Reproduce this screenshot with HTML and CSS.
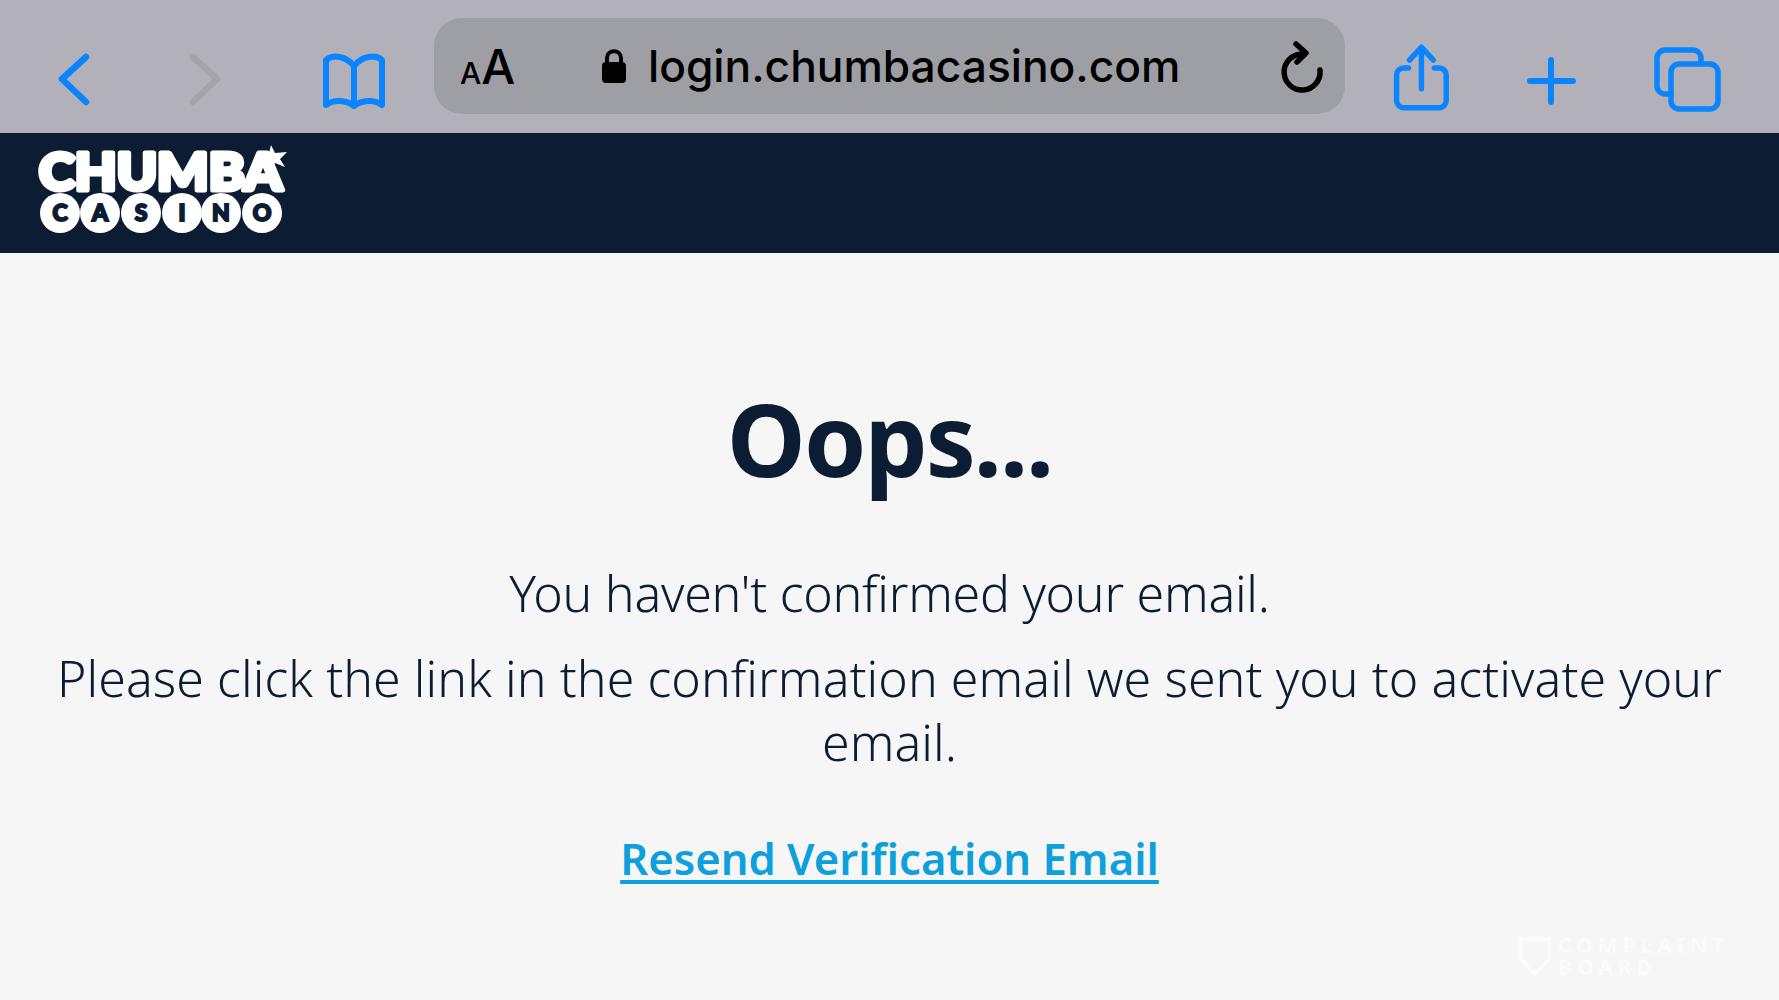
FILE: index.html
```html
<!DOCTYPE html>
<html lang="en">
<head>
<meta charset="utf-8">
<title>Chumba Casino</title>
<link rel="stylesheet" href="styles.css">
</head>
<body>
<div class="toolbar">
  <svg class="slot slot-back" viewBox="0 0 130 133"><path class="ic blue" d="M86 57 62 79 86 102"/></svg>
  <svg class="slot slot-fwd" viewBox="130 0 120 133"><path class="ic grey" d="M193 57 217 79 193 102"/></svg>
  <svg class="slot slot-book" viewBox="250 0 184 133"><path class="ic blue book" d="M354 66C346 56 333 54 326 60V105C334 99 346 100 354 106C362 100 374 99 382 105V60C375 54 362 56 354 66ZM354 66V106"/></svg>
  <div class="urlbar">
    <div class="aa"><span class="aa-s">A</span><span class="aa-l">A</span></div>
    <svg class="lock" viewBox="0 0 26 36"><path class="lock-bow" d="M6 16V10C6 1 20 1 20 10V16"/><rect class="lock-body" x="1" y="14" width="24" height="21" rx="4"/></svg>
    <span class="url">login.chumbacasino.com</span>
    <svg class="reload" viewBox="0 0 44 52"><path class="ic dark wide" d="M40 28A18 18 0 1 1 22 12M16 2 26 11 17 20"/></svg>
  </div>
  <svg class="slot slot-share" viewBox="1344 0 132 133"><path class="ic blue thin" d="M1408 68H1403A7 7 0 0 0 1396 75V101A7 7 0 0 0 1403 108H1439A7 7 0 0 0 1446 101V75A7 7 0 0 0 1439 68H1434M1421 89V48M1409 60 1421 47 1433 60"/></svg>
  <svg class="slot slot-plus" viewBox="1476 0 130 133"><path class="ic blue plus" d="M1551 60V102M1530 81H1573"/></svg>
  <svg class="slot slot-tabs" viewBox="1606 0 173 133"><path class="ic blue thin" d="M1671 94H1665A8 8 0 0 1 1657 86V58A8 8 0 0 1 1665 50H1693A8 8 0 0 1 1701 58V64"/><rect class="ic blue thin" x="1671" y="64" width="47" height="45" rx="8"/></svg>
</div>
<header class="site-head">
  <svg class="logo" viewBox="0 0 252 88" role="img" aria-label="Chumba Casino">
    <text class="logo-top" x="2" y="45" textLength="243" lengthAdjust="spacingAndGlyphs">CHUMBA</text>
    <polygon class="logo-star" points="234,0 238,8 250,7 243,14 248,22 238,18 232,25 231,15 222,11 232,8"/>
    <g class="logo-balls">
      <circle cx="23" cy="68" r="20"/><circle cx="63" cy="68" r="20"/><circle cx="104" cy="68" r="20"/><circle cx="145" cy="68" r="20"/><circle cx="184" cy="68" r="20"/><circle cx="225" cy="68" r="20"/>
    </g>
    <g class="logo-letters">
      <text x="23" y="76">C</text><text x="63" y="76">A</text><text x="104" y="76">S</text><text x="145" y="76">I</text><text x="184" y="76">N</text><text x="225" y="76">O</text>
    </g>
  </svg>
</header>
<main class="content">
  <h1 class="title">Oops...</h1>
  <p class="msg msg-first">You haven't confirmed your email.</p>
  <p class="msg msg-wide">Please click the link in the confirmation email we sent you to activate your email.</p>
  <a class="resend" href="#">Resend Verification Email</a>
</main>
<div class="watermark">
  <svg class="wm-icon" viewBox="0 0 36 42"><path d="M3 3H33V24L18 40 3 24Z"/></svg>
  <div class="wm-text"><span>COMPLAINT</span><span>BOARD</span></div>
</div>
</body>
</html>
```
FILE: styles.css
```css
* { box-sizing: border-box; }
html, body { margin: 0; height: 100%; overflow: hidden; }
body { background: #f6f6f6; font-family: "Noto Sans", sans-serif; color: #0c1d33; position: relative; }

.toolbar { display: flex; height: 133px; background: #b2b1b9; }
.slot { display: block; height: 133px; flex: none; }
.slot-back { width: 130px; }
.slot-fwd { width: 120px; }
.slot-book { width: 184px; }
.slot-share { width: 131px; }
.slot-plus { width: 130px; }
.slot-tabs { width: 173px; }

.ic { fill: none; stroke-linecap: round; stroke-linejoin: round; stroke-width: 6.5; }
.ic.thin { stroke-width: 5.5; }
.ic.book { stroke-width: 6; }
.ic.wide { stroke-width: 5.5; }
.ic.plus { stroke-width: 6; }
.blue { stroke: #0a84ff; }
.grey { stroke: #a4a4a8; }
.dark { stroke: #000; }

.urlbar { flex: none; width: 911px; height: 96px; margin-top: 18px; border-radius: 28px; background: #9e9ea5; display: flex; align-items: center; }
.aa { display: flex; align-items: baseline; width: 167px; padding: 1px 0 0 26px; font-family: "Inter", sans-serif; color: #000; font-weight: 500; }
.aa-s { font-size: 30px; }
.aa-l { font-size: 48px; }
.lock { width: 26px; height: 36px; flex: none; }
.lock-bow { fill: none; stroke: #000; stroke-width: 4; }
.lock-body { fill: #000; }
.url { margin-left: 21px; font-family: "Inter", sans-serif; font-weight: 500; font-size: 44.3px; color: #000; white-space: nowrap; }
.reload { width: 44px; height: 52px; flex: none; margin-left: 100px; margin-top: 4px; overflow: visible; }

.site-head { height: 120px; background: #0c1d33; padding: 12px 0 0 37px; }
.logo { display: block; width: 252px; height: 88px; overflow: visible; }
.logo-top { font-family: "Lato", sans-serif; font-weight: 900; font-size: 52px; fill: #fff; stroke: #fff; stroke-width: 5; stroke-linejoin: round; }
.logo-star, .logo-balls circle { fill: #fff; }
.logo-letters text { font-family: "Lato", sans-serif; font-weight: 900; font-size: 23px; fill: #0c1d33; stroke: #0c1d33; stroke-width: 2; text-anchor: middle; }

.content { padding: 0 50px; text-align: center; }
.title { margin: 100px 0 0; font-size: 100px; line-height: 170px; font-weight: 700; letter-spacing: -2px; }
.msg { margin: 0; font-size: 50px; line-height: 64px; font-weight: 300; }
.msg-first { margin-top: 38px; letter-spacing: -0.25px; }
.msg-wide { margin-top: 21px; letter-spacing: 0.08px; }
.resend { display: inline-block; margin-top: 52px; font-size: 43.6px; line-height: 64px; font-weight: 600; color: #0ea0dc; text-decoration-thickness: 4px; text-underline-offset: 5px; }

.watermark { position: absolute; left: 1518px; top: 934px; display: flex; gap: 6px; align-items: center; color: #fbfbfb; }
.wm-icon { width: 34px; height: 42px; fill: none; stroke: #fbfbfb; stroke-width: 4; }
.wm-text { display: flex; flex-direction: column; font-size: 21px; line-height: 22px; font-weight: 700; letter-spacing: 5px; }
```
